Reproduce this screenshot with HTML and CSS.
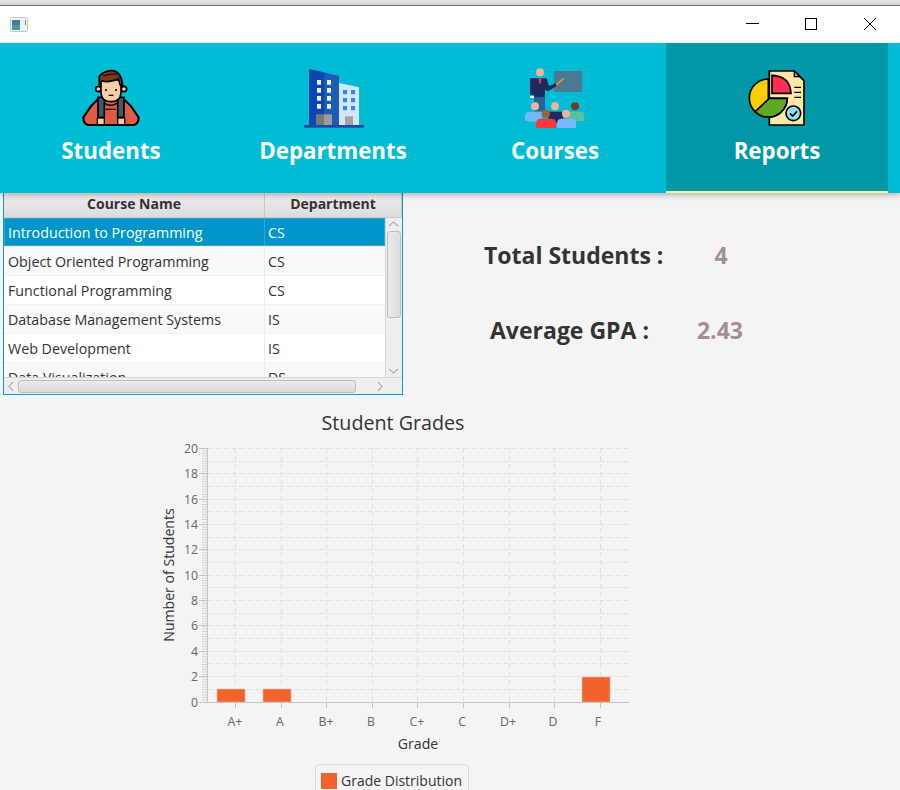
FILE: index.html
```html
<!DOCTYPE html>
<html lang="en">
<head>
<meta charset="utf-8">
<title>Reports</title>
<link rel="stylesheet" href="styles.css">
</head>
<body>
<div class="desktop-strip"></div>
<header class="titlebar">
  <svg class="app-icon" width="18" height="15" viewBox="0 0 18 15"><rect x="0.5" y="0.5" width="17" height="14" rx="1" fill="#eef1f1" stroke="#c3c8cc"/><rect x="2" y="3" width="8" height="10" fill="#4f9a8c"/><rect x="2" y="3" width="8" height="5" fill="#3c7fa4"/><rect x="15" y="3" width="1" height="5" fill="#4fa58f"/></svg>
  <div class="controls">
    <svg class="ctl" width="58" height="37" viewBox="0 0 58 37"><path d="M23 17.5H36" stroke="#000" fill="none"/></svg>
    <svg class="ctl" width="58" height="37" viewBox="0 0 58 37"><rect x="23.5" y="12.5" width="11" height="11" stroke="#000" fill="none"/></svg>
    <svg class="ctl" width="58" height="37" viewBox="0 0 58 37"><path d="M23 12L35 24M35 12L23 24" stroke="#000" fill="none"/></svg>
  </div>
</header>
<nav class="nav">
  <a class="tab">
    <svg class="tab-icon" viewBox="3 0 240 225">
      <path d="M40 172 L62 140 L85 116 H160 L184 140 L206 172 Q206 192 192 195 H54 Q40 192 40 172Z" fill="#E05B43" stroke="#000" stroke-width="6"/>
      <path d="M104 130 Q122 142 140 130" fill="none" stroke="#000" stroke-width="5"/>
      <path d="M107 148h30" stroke="#000" stroke-width="4"/>
      <rect x="84" y="112" width="19" height="60" fill="#3E5872" stroke="#000" stroke-width="5"/>
      <rect x="143" y="112" width="19" height="60" fill="#3E5872" stroke="#000" stroke-width="5"/>
      <rect x="82" y="174" width="21" height="20" fill="#FBCDA8" stroke="#000" stroke-width="4"/>
      <rect x="143" y="174" width="21" height="20" fill="#FBCDA8" stroke="#000" stroke-width="4"/>
      <circle cx="85" cy="87" r="8" fill="#FBCDA8" stroke="#000" stroke-width="5"/>
      <circle cx="162" cy="87" r="8" fill="#FBCDA8" stroke="#000" stroke-width="5"/>
      <path d="M93 60 H153 V100 Q150 125 123 125 Q96 125 93 100Z" fill="#FBCDA8" stroke="#000" stroke-width="5"/>
      <path d="M88 72 V48 Q105 30 130 32 Q155 38 158 78 L150 74 L145 56 Q115 70 96 62Z" fill="#7A3A22" stroke="#000" stroke-width="5"/>
      <path d="M100 48 Q120 40 140 42" fill="none" stroke="#000" stroke-width="3"/>
      <path d="M105 90h6M135 90h6" stroke="#000" stroke-width="5"/>
      <path d="M116 106h14" stroke="#000" stroke-width="4"/>
    </svg>
    <span class="tab-label">Students</span>
  </a>
  <a class="tab">
    <svg class="tab-icon" viewBox="-6 0 240 225">
      <path d="M42 27 L87 37 V196 H42Z" fill="#0D47AB"/>
      <path d="M87 37 L132 48 V196 H87Z" fill="#1A5CB6"/>
      <path d="M132 69 L192 82 V196 H132Z" fill="#D3E6F8"/>
      <path fill="#E8EFF8" d="M66 60h12v14H66zM96 60h12v14H96zM66 84h12v14H66zM96 84h12v14H96zM66 108h12v14H66zM96 108h12v14H96zM66 132h12v14H66zM96 132h12v14H96z"/>
      <path fill="#2E86F0" d="M144 90h12v13h-12zM168 90h12v13h-12zM144 114h12v13h-12zM168 114h12v13h-12zM144 138h12v13h-12zM168 138h12v13h-12z"/>
      <rect x="63" y="163" width="24" height="33" fill="#787878"/>
      <rect x="87" y="163" width="24" height="33" fill="#9C9C9C"/>
      <rect x="150" y="169" width="24" height="27" fill="#A3A3A3"/>
      <rect x="27" y="195" width="180" height="8" fill="#1C4AA3"/>
    </svg>
    <span class="tab-label">Departments</span>
  </a>
  <a class="tab">
    <svg class="tab-icon" viewBox="0 0 240 225">
      <rect x="117" y="33" width="84" height="63" rx="2" fill="#4A7A92"/>
      <path d="M118 80 L146 55" stroke="#F28A3C" stroke-width="5"/>
      <rect x="57" y="105" width="33" height="50" fill="#2A6496"/>
      <path d="M45 55 H95 L102 78 L122 70 L125 78 L100 94 L90 90 V112 H57 V105 H45Z" fill="#1C2A5E"/>
      <circle cx="75" cy="37" r="12" fill="#F4B29A"/>
      <path d="M70 54h10l-3 18h-4z" fill="#E8383B"/>
      <rect x="45" y="108" width="12" height="6" fill="#fff"/>
      <path d="M160 155 H200 Q208 155 208 175 V183 H160Z" fill="#5CBFA2"/>
      <circle cx="180" cy="139" r="12" fill="#7A3A1E"/>
      <path d="M100 155 H145 V190 H100Z" fill="#1F2A60"/>
      <circle cx="120" cy="139" r="12" fill="#F4B29A"/>
      <path d="M30 183 V165 Q32 155 45 155 H80 V185 H42 V183Z" fill="#72B8F4"/>
      <circle cx="60" cy="139" r="12" fill="#F4B29A"/>
      <path d="M63 204 V188 Q65 176 78 176 H110 Q123 176 123 188 V204Z" fill="#F2393C"/>
      <circle cx="93" cy="161" r="12" fill="#A65F3C"/>
      <path d="M126 204 V188 Q128 176 140 176 H170 Q183 176 183 188 V204Z" fill="#7AB8F8"/>
      <circle cx="153" cy="161" r="12" fill="#F4B29A"/>
    </svg>
    <span class="tab-label">Courses</span>
  </a>
  <a class="tab tab-active">
    <svg class="tab-icon" viewBox="-9 0 240 225">
      <path d="M88 33 H163 L192 62 V195 H88Z" fill="#FFE7A8" stroke="#000" stroke-width="5"/>
      <path d="M163 33 V50 H180 L192 62 L163 33Z" fill="#F58C6A" stroke="#000" stroke-width="4"/>
      <path d="M85 57 A57 57 0 1 0 142 115 H85Z" fill="#FFCE00" stroke="#000" stroke-width="5"/>
      <path d="M142 115 A57 57 0 0 1 45 155 L88 115Z" fill="#5FA825" stroke="#000" stroke-width="5"/>
      <path d="M96 46 Q150 48 153 100 H96Z" fill="#FF2F57" stroke="#000" stroke-width="5"/>
      <path d="M163 82h20M163 97h20M163 112h20" stroke="#000" stroke-width="4"/>
      <circle cx="160" cy="160" r="22" fill="#8BE4F0" stroke="#000" stroke-width="5"/>
      <path d="M150 160l8 8 13-14" fill="none" stroke="#000" stroke-width="5"/>
    </svg>
    <span class="tab-label">Reports</span>
  </a>
</nav>
<main class="content">
  <section class="top-row">
    <div class="table">
      <div class="thead">
        <div class="th col-name">Course Name</div>
        <div class="th col-dept">Department</div>
      </div>
      <div class="tbody">
        <div class="rows">
          <div class="row selected"><div class="td col-name">Introduction to Programming</div><div class="td col-dept">CS</div></div>
          <div class="row odd"><div class="td col-name">Object Oriented Programming</div><div class="td col-dept">CS</div></div>
          <div class="row"><div class="td col-name">Functional Programming</div><div class="td col-dept">CS</div></div>
          <div class="row odd"><div class="td col-name">Database Management Systems</div><div class="td col-dept">IS</div></div>
          <div class="row"><div class="td col-name">Web Development</div><div class="td col-dept">IS</div></div>
          <div class="row odd"><div class="td col-name">Data Visualization</div><div class="td col-dept">DS</div></div>
        </div>
        <div class="vbar">
          <svg class="arrow" width="16" height="12" viewBox="0 0 16 12"><path d="M3 8L7.5 4L12 8" fill="none" stroke="#8a8a8a"/></svg>
          <div class="vthumb"></div>
          <div class="spacer"></div>
          <svg class="arrow" width="16" height="12" viewBox="0 0 16 12"><path d="M3 4L7.5 8L12 4" fill="none" stroke="#8a8a8a"/></svg>
        </div>
      </div>
      <div class="hbar">
        <svg class="arrow" width="14" height="16" viewBox="0 0 14 16"><path d="M9 4L5 8.5L9 13" fill="none" stroke="#8a8a8a"/></svg>
        <div class="hthumb"></div>
        <svg class="arrow" width="46" height="16" viewBox="0 0 46 16"><path d="M22 4L26 8.5L22 13" fill="none" stroke="#8a8a8a"/></svg>
      </div>
    </div>
    <div class="stats">
      <div class="stat stat-total"><span class="stat-key">Total Students :</span><span class="stat-val val-total">4</span></div>
      <div class="stat stat-gpa"><span class="stat-key">Average GPA :</span><span class="stat-val val-gpa">2.43</span></div>
    </div>
  </section>
  <section class="chart">
    <h2 class="chart-title">Student Grades</h2>
    <svg class="plot" width="500" height="319" viewBox="150 436 500 319">
      <path class="grid" d="M207 448.5H629M207 461.5H629M207 473.5H629M207 486.5H629M207 499.5H629M207 511.5H629M207 524.5H629M207 537.5H629M207 549.5H629M207 562.5H629M207 575.5H629M207 587.5H629M207 600.5H629M207 613.5H629M207 625.5H629M207 638.5H629M207 651.5H629M207 663.5H629M207 676.5H629M207 689.5H629"/>
      <path class="grid" d="M235.5 448V702M281.5 448V702M326.5 448V702M372.5 448V702M417.5 448V702M463.5 448V702M509.5 448V702M554.5 448V702M600.5 448V702"/>
      <rect class="bar" x="217" y="689" width="28" height="13"/>
      <rect class="bar" x="263" y="689" width="28" height="13"/>
      <rect class="bar" x="582" y="677" width="28" height="25"/>
      <path class="minor" d="M204.5 448V702"/>
      <path class="axis" d="M207.5 448V702.5H629"/>
      <path class="axis" d="M199 448.5H207M199 473.5H207M199 499.5H207M199 524.5H207M199 549.5H207M199 575.5H207M199 600.5H207M199 625.5H207M199 651.5H207M199 676.5H207M199 702.5H207"/>
      <path class="axis" d="M235.5 702V708M281.5 702V708M326.5 702V708M372.5 702V708M417.5 702V708M463.5 702V708M509.5 702V708M554.5 702V708M600.5 702V708"/>
      <g class="ytick">
        <text x="198" y="453">20</text><text x="198" y="478">18</text><text x="198" y="504">16</text><text x="198" y="529">14</text><text x="198" y="554">12</text><text x="198" y="580">10</text><text x="198" y="605">8</text><text x="198" y="630">6</text><text x="198" y="656">4</text><text x="198" y="681">2</text><text x="198" y="707">0</text>
      </g>
      <g class="xtick">
        <text x="235" y="726">A+</text><text x="280" y="726">A</text><text x="326" y="726">B+</text><text x="371" y="726">B</text><text x="417" y="726">C+</text><text x="462" y="726">C</text><text x="508" y="726">D+</text><text x="553" y="726">D</text><text x="598" y="726">F</text>
      </g>
      <text class="axis-title" x="418" y="749">Grade</text>
      <text class="axis-title" transform="translate(174 575) rotate(-90)">Number of Students</text>
    </svg>
    <div class="legend"><span class="swatch"></span><span>Grade Distribution</span></div>
  </section>
</main>
</body>
</html>
```
FILE: styles.css
```css
* { box-sizing: border-box; }
html, body { margin: 0; height: 790px; overflow: hidden; }
body {
  background: #f4f4f4;
  color: #333;
  font-family: "Open Sans", "Noto Sans", sans-serif;
  display: flex;
  flex-direction: column;
}
.desktop-strip {
  height: 6px;
  background: linear-gradient(#e4e4e4, #d2d2d2);
  border-bottom: 1px solid #6e6e6e;
  flex: none;
}
.titlebar {
  height: 37px;
  flex: none;
  background: #fff;
  display: flex;
  align-items: center;
  justify-content: space-between;
  padding-left: 10px;
}
.app-icon { margin-top: -1px; }
.controls { display: flex; }
.ctl { display: block; margin-right: 1px; }
.nav {
  position: relative;
  z-index: 2;
  flex: none;
  height: 150px;
  background: #00bcd4;
  display: flex;
  box-shadow: 0 2px 6px rgba(0, 0, 0, 0.28);
}
.tab {
  width: 222px;
  display: flex;
  flex-direction: column;
  align-items: center;
  padding-top: 17px;
  color: #fff;
}
.tab-active {
  background: #0097a7;
  border-bottom: 2px solid #f6f59a;
}
.tab-icon { width: 80px; height: 75px; display: block; flex: none; }
.tab-label {
  font-size: 22.3px;
  font-weight: 700;
  line-height: 30px;
  margin-top: 1px;
}
.content { flex: 1; min-height: 0; }
.top-row { display: flex; height: 212px; padding-left: 3px; }
.table {
  width: 400px;
  height: 202px;
  border: 1px solid #039ed3;
  border-top: 0;
  background: #f4f4f4;
  display: flex;
  flex-direction: column;
  overflow: hidden;
  flex: none;
}
.thead {
  display: flex;
  height: 25px;
  flex: none;
  background: linear-gradient(#efefef, #dcdcdc);
  border-bottom: 1px solid #c8c8c8;
}
.th {
  font-size: 14px;
  font-weight: 700;
  line-height: 22px;
  text-align: center;
  border-right: 1px solid #c8c8c8;
}
.col-name { width: 261px; flex: none; }
.col-dept { flex: 1; }
.th.col-dept { width: 137px; flex: none; }
.tbody { display: flex; height: 159px; flex: none; overflow: hidden; }
.rows { width: 381px; flex: none; }
.row { display: flex; height: 29px; background: #fff; border-bottom: 1px solid #f0f0f0; }
.row.odd { background: #f9f9f9; }
.row.selected { background: #0096c9; color: #fff; box-shadow: inset 0 0 0 1px #2fa6d4; }
.td {
  font-size: 14.25px;
  line-height: 30px;
  padding-left: 4px;
  border-right: 1px solid #ececec;
  white-space: nowrap;
}
.row.selected .td { border-right-color: #2fa6d4; }
.td.col-dept { padding-left: 3px; border-right: 0; }
.vbar {
  width: 17px;
  flex: none;
  background: #eeeeee;
  border-left: 1px solid #d6d6d6;
  display: flex;
  flex-direction: column;
  align-items: center;
}
.arrow { display: block; flex: none; }
.vthumb {
  width: 14px;
  height: 87px;
  flex: none;
  margin-top: 1px;
  border: 1px solid #bdbdbd;
  border-radius: 3px;
  background: linear-gradient(90deg, #ececec, #dcdcdc);
}
.spacer { flex: 1; }
.hbar {
  height: 17px;
  flex: none;
  display: flex;
  align-items: center;
  background: #eeeeee;
  border-top: 1px solid #d6d6d6;
}
.hthumb {
  width: 338px;
  height: 13px;
  flex: none;
  border: 1px solid #bdbdbd;
  border-radius: 3px;
  background: linear-gradient(#ececec, #d9d9d9);
}
.stats { flex: 1; display: flex; flex-direction: column; }
.stat { display: flex; font-size: 23px; font-weight: 700; line-height: 30px; }
.stat-total { margin-top: 47px; padding-left: 81px; }
.stat-gpa { margin-top: 45px; padding-left: 87px; }
.stat-val { color: #a58e93; }
.val-total { margin-left: 51px; }
.val-gpa { margin-left: 48px; }
.chart { display: flex; flex-direction: column; }
.chart-title {
  margin: 0;
  padding-top: 4px;
  font-size: 19.7px;
  font-weight: 400;
  line-height: 27px;
  text-align: center;
  width: 786px;
}
.plot { display: block; margin-left: 150px; flex: none; }
.grid { stroke: #e0e0e0; stroke-width: 1; stroke-dasharray: 5 3; fill: none; }
.bar { fill: #f3622d; stroke: #f7b8a0; stroke-width: 0.6; }
.minor { stroke: #d2d2d2; stroke-width: 5; stroke-dasharray: 1 1.54; fill: none; }
.axis { stroke: #c4c4c4; stroke-width: 1; fill: none; }
.ytick text { font-size: 12.3px; fill: #666; text-anchor: end; }
.xtick text { font-size: 12.3px; fill: #666; text-anchor: middle; }
.axis-title { font-size: 14.1px; fill: #333; text-anchor: middle; }
.legend {
  margin: 9px 0 0 315px;
  width: 154px;
  height: 40px;
  flex: none;
  border: 1px solid #dcdcdc;
  border-radius: 4px;
  padding: 8px 0 0 5px;
  display: flex;
  gap: 4px;
  font-size: 14px;
  line-height: 16px;
}
.swatch { width: 16px; height: 16px; background: #f3622d; flex: none; }
```
